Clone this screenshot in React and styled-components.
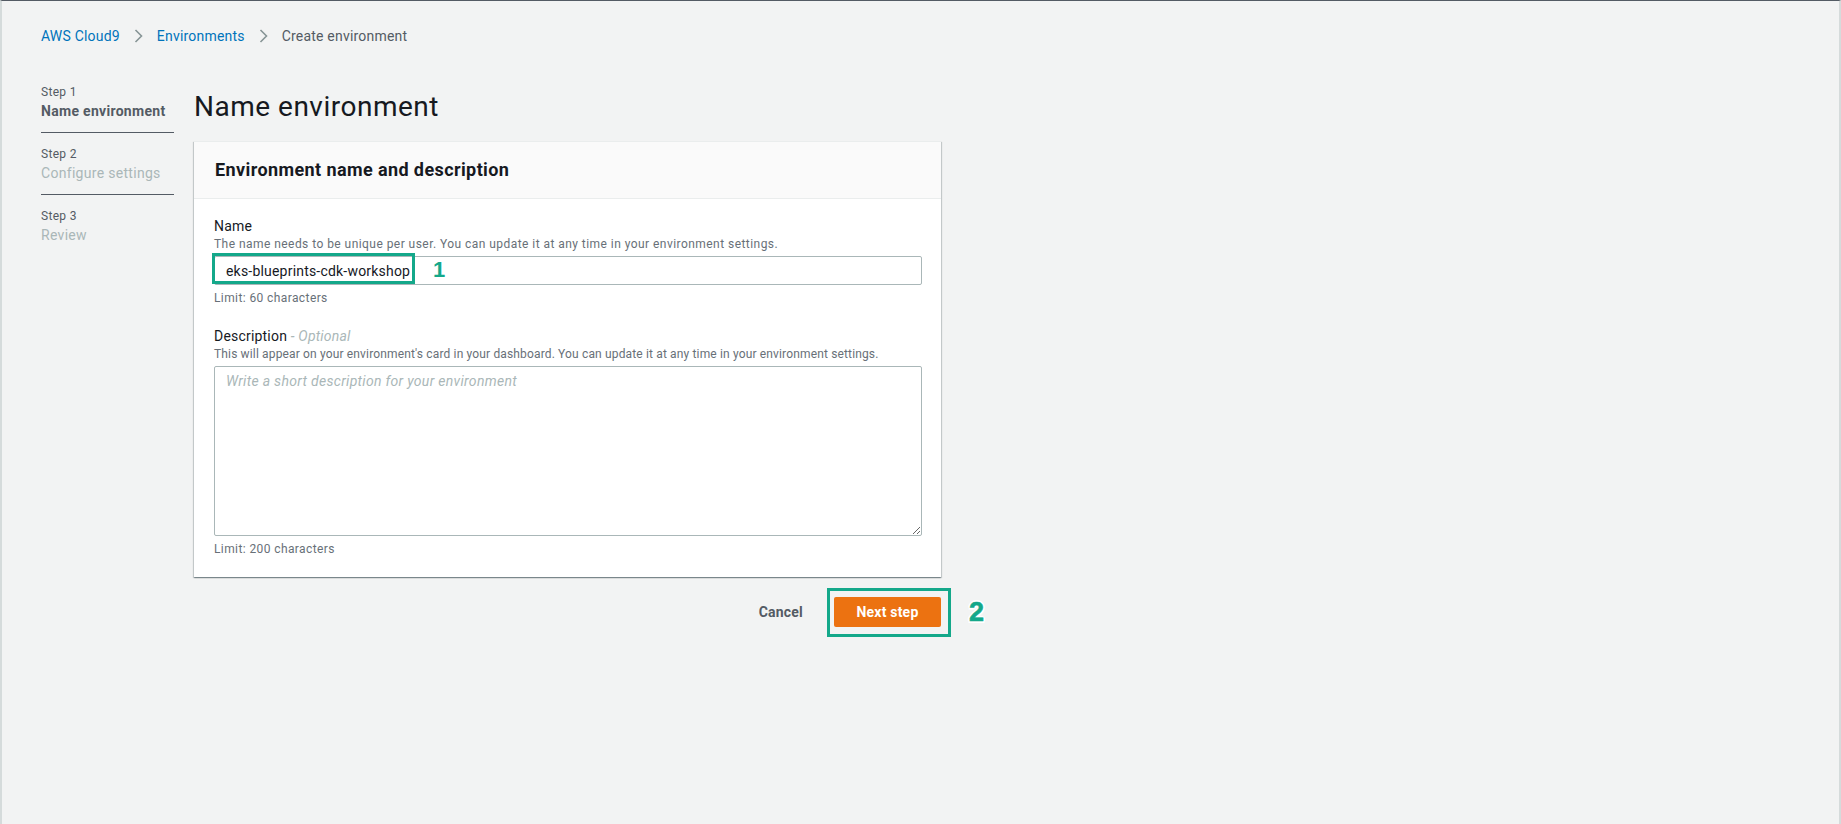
import React from 'react';
import styled, { createGlobalStyle } from 'styled-components';

const GlobalStyle = createGlobalStyle`
  * {
    box-sizing: border-box;
  }
  html, body {
    margin: 0;
    padding: 0;
    background: #f2f3f3;
    font-family: Roboto, "Liberation Sans", Arial, sans-serif;
  }
`;

const steps = [
  { label: 'Step 1', title: 'Name environment', active: true },
  { label: 'Step 2', title: 'Configure settings' },
  { label: 'Step 3', title: 'Review', last: true },
];

const Chevron = () => (
  <svg width="9" height="14" viewBox="0 0 9 14" fill="none">
    <path d="M1.5 1 L7.5 7 L1.5 13" stroke="#879596" strokeWidth="1.6" />
  </svg>
);

const App = () => (
  <Page>
    <GlobalStyle />
    <Breadcrumbs>
      <Crumb href="#">AWS Cloud9</Crumb>
      <Chevron />
      <Crumb href="#">Environments</Crumb>
      <Chevron />
      <Crumb current>Create environment</Crumb>
    </Breadcrumbs>

    <Layout>
      <StepList>
        {steps.map((s) => (
          <StepItem key={s.label} last={s.last}>
            <StepLabel>{s.label}</StepLabel>
            <StepTitle active={s.active}>{s.title}</StepTitle>
          </StepItem>
        ))}
      </StepList>

      <Content>
        <Title>Name environment</Title>
        <Card>
          <CardHeader>
            <CardTitle>Environment name and description</CardTitle>
          </CardHeader>
          <CardBody>
            <Field>
              <Label>Name</Label>
              <Hint spacing={0.45}>
                The name needs to be unique per user. You can update it at any
                time in your environment settings.
              </Hint>
              <InputWrap>
                <Input defaultValue="eks-blueprints-cdk-workshop" />
                <Highlight />
                <Marker>1</Marker>
              </InputWrap>
              <Constraint>Limit: 60 characters</Constraint>
            </Field>

            <Field>
              <Label>
                Description <Optional>- Optional</Optional>
              </Label>
              <Hint spacing={0.15}>
                This will appear on your environment's card in your dashboard.
                You can update it at any time in your environment settings.
              </Hint>
              <TextArea placeholder="Write a short description for your environment" />
              <Constraint>Limit: 200 characters</Constraint>
            </Field>
          </CardBody>
        </Card>

        <Actions>
          <LinkButton>Cancel</LinkButton>
          <PrimaryWrap>
            <PrimaryButton>Next step</PrimaryButton>
            <ButtonHighlight />
          </PrimaryWrap>
          <BigMarker>2</BigMarker>
        </Actions>
      </Content>
    </Layout>
  </Page>
);

const Page = styled.div`
  min-height: 100vh;
  border-top: 1px solid #545b64;
  border-left: 2px solid #d5dbdb;
  border-right: 2px solid #d5dbdb;
  padding: 25px 0 0 39px;
`;

const Breadcrumbs = styled.nav`
  display: flex;
  align-items: center;
  gap: 14px;
  height: 20px;
  font-size: 14px;
  line-height: 20px;
  letter-spacing: 0.2px;
`;

const Crumb = styled.a`
  color: ${(p) => (p.current ? '#545b64' : '#0073bb')};
  text-decoration: none;
`;

const Layout = styled.div`
  display: grid;
  grid-template-columns: 133px 747px;
  column-gap: 20px;
  margin-top: 37px;
`;

const StepList = styled.ul`
  list-style: none;
  margin: 0;
  padding: 0;
`;

const StepItem = styled.li`
  padding: 0 0 11px;
  border-bottom: ${(p) => (p.last ? 'none' : '1px solid #545b64')};
  & + & {
    padding-top: 12px;
  }
`;

const StepLabel = styled.div`
  font-size: 12px;
  line-height: 18px;
  letter-spacing: 0.3px;
  color: #545b64;
`;

const StepTitle = styled.div`
  font-size: 14px;
  line-height: 20px;
  letter-spacing: 0.3px;
  font-weight: ${(p) => (p.active ? 700 : 400)};
  color: ${(p) => (p.active ? '#545b64' : '#aab7b8')};
`;

const Content = styled.div`
  padding-top: 6px;
`;

const Title = styled.h1`
  margin: 0 0 16px;
  font-size: 28px;
  line-height: 36px;
  font-weight: 400;
  letter-spacing: 0.5px;
  color: #16191f;
`;

const Card = styled.section`
  background: #fff;
  border-top: 1px solid #eaeded;
  box-shadow: 0 1px 1px 0 rgba(0, 28, 36, 0.3),
    1px 1px 1px 0 rgba(0, 28, 36, 0.15), -1px 1px 1px 0 rgba(0, 28, 36, 0.15);
`;

const CardHeader = styled.div`
  background: #fafafa;
  border-bottom: 1px solid #eaeded;
  padding: 17px 20px 17px 21px;
`;

const CardTitle = styled.h2`
  margin: 0;
  font-size: 18px;
  line-height: 22px;
  font-weight: 700;
  letter-spacing: 0.4px;
  color: #16191f;
`;

const CardBody = styled.div`
  padding: 17px 19px 20px 20px;
  display: flex;
  flex-direction: column;
  gap: 20px;
`;

const Field = styled.div`
  display: flex;
  flex-direction: column;
`;

const Label = styled.label`
  font-size: 14px;
  line-height: 20px;
  letter-spacing: 0.2px;
  color: #16191f;
`;

const Optional = styled.i`
  color: #aab7b8;
`;

const Hint = styled.div`
  font-size: 12px;
  line-height: 16px;
  letter-spacing: ${(p) => p.spacing}px;
  color: #687078;
  margin-bottom: 4px;
`;

const InputWrap = styled.div`
  position: relative;
`;

const Input = styled.input`
  display: block;
  width: 100%;
  height: 29px;
  padding: 0 11px;
  border: 1px solid #aab7b8;
  border-radius: 2px;
  font-family: inherit;
  font-size: 14px;
  letter-spacing: 0.2px;
  color: #16191f;
  background: #fff;
  outline: none;
`;

const Highlight = styled.div`
  position: absolute;
  left: -2px;
  top: -3px;
  width: 203px;
  height: 31px;
  border: 3px solid #14a88a;
  pointer-events: none;
`;

const Marker = styled.span`
  position: absolute;
  left: 219px;
  top: 3px;
  font-family: "Liberation Sans", Arial, sans-serif;
  font-size: 22px;
  line-height: 22px;
  font-weight: 700;
  color: #14a88a;
`;

const TextArea = styled.textarea`
  display: block;
  width: 100%;
  height: 170px;
  padding: 4px 11px;
  border: 1px solid #aab7b8;
  border-radius: 2px;
  font-family: inherit;
  font-size: 14px;
  line-height: 20px;
  letter-spacing: 0.3px;
  color: #16191f;
  background: #fff;
  outline: none;
  &::placeholder {
    color: #aab7b8;
    font-style: italic;
  }
`;

const Constraint = styled.div`
  margin-top: 5px;
  font-size: 12px;
  line-height: 16px;
  letter-spacing: 0.4px;
  color: #687078;
`;

const Actions = styled.div`
  position: relative;
  display: flex;
  justify-content: flex-end;
  align-items: center;
  gap: 11px;
  margin-top: 20px;
`;

const LinkButton = styled.button`
  border: none;
  background: none;
  padding: 4px 20px;
  font-family: inherit;
  font-size: 14px;
  line-height: 21px;
  font-weight: 700;
  letter-spacing: 0.2px;
  color: #545b64;
`;

const PrimaryWrap = styled.div`
  position: relative;
`;

const PrimaryButton = styled.button`
  display: block;
  width: 107px;
  height: 30px;
  border: none;
  border-radius: 2px;
  background: #ec7211;
  color: #fff;
  font-family: inherit;
  font-size: 14px;
  font-weight: 700;
  letter-spacing: 0.2px;
`;

const ButtonHighlight = styled.div`
  position: absolute;
  left: -7px;
  top: -9px;
  right: -10px;
  bottom: -10px;
  border: 3px solid #14a88a;
  pointer-events: none;
`;

const BigMarker = styled.span`
  position: absolute;
  left: calc(100% + 28px);
  top: 1px;
  font-family: "Liberation Sans", Arial, sans-serif;
  font-size: 27px;
  line-height: 29px;
  font-weight: 700;
  color: #14a88a;
  -webkit-text-stroke: 0.6px #14a88a;
  text-shadow: 2px 0 #fff, -2px 0 #fff, 0 2px #fff, 0 -2px #fff,
    1.5px 1.5px #fff, -1.5px 1.5px #fff, 1.5px -1.5px #fff, -1.5px -1.5px #fff;
`;

export default App;
